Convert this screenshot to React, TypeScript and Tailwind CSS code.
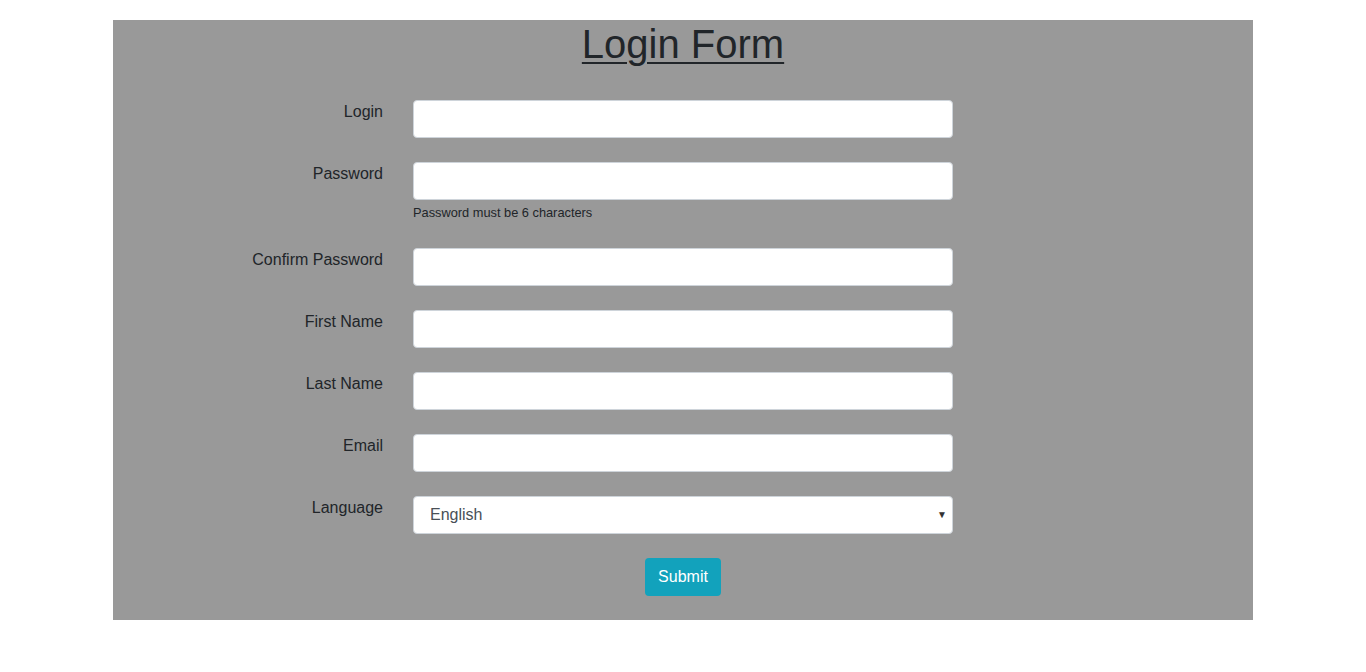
import React from "react";

const fields = [
  { label: "Login", type: "text" },
  { label: "Password", type: "password", help: "Password must be 6 characters" },
  { label: "Confirm Password", type: "password" },
  { label: "First Name", type: "text" },
  { label: "Last Name", type: "text" },
  { label: "Email", type: "email" },
];

export default function App() {
  return (
    <div className="min-h-[672px] bg-white pt-[20px] text-[#212529] text-[16px] leading-[24px]" style={{ fontFamily: '"Liberation Sans", Arial, sans-serif' }}>
      <div className="mx-auto w-[1140px] bg-[#999999] pb-[24px]">
        <h1 className="text-center text-[40px] leading-[48px] underline decoration-[2px] underline-offset-[4px] mb-[32px]">Login Form</h1>
        <form className="flex flex-col">
          {fields.map((f) => (
            <div key={f.label} className="flex mb-[24px]">
              <label className="w-[285px] pr-[15px] text-right">{f.label}</label>
              <div className="w-[570px] px-[15px]">
                <input
                  type={f.type}
                  className="block w-full h-[38px] bg-white border border-[#ced4da] rounded-[4px] px-[12px] outline-none"
                />
                {f.help && (
                  <div className="mt-[4px] pb-[2px] text-[12.8px] leading-[18px] text-[#212529]">{f.help}</div>
                )}
              </div>
            </div>
          ))}
          <div className="flex mb-[24px]">
            <label className="w-[285px] pr-[15px] text-right">Language</label>
            <div className="w-[570px] px-[15px]">
              <div className="relative">
                <select className="block w-full h-[38px] appearance-none bg-white border border-[#ced4da] rounded-[4px] pl-[16px] pr-[24px] text-[#495057] outline-none">
                  <option>English</option>
                  <option>French</option>
                  <option>Spanish</option>
                </select>
                <span className="pointer-events-none absolute right-[6px] top-[9px] text-[10px] leading-[20px] text-[#333]">▼</span>
              </div>
            </div>
          </div>
          <div className="flex justify-center">
            <button type="button" className="h-[38px] w-[76px] rounded-[4px] bg-[#12a2bc] text-white text-[16px]">Submit</button>
          </div>
        </form>
      </div>
    </div>
  );
}
